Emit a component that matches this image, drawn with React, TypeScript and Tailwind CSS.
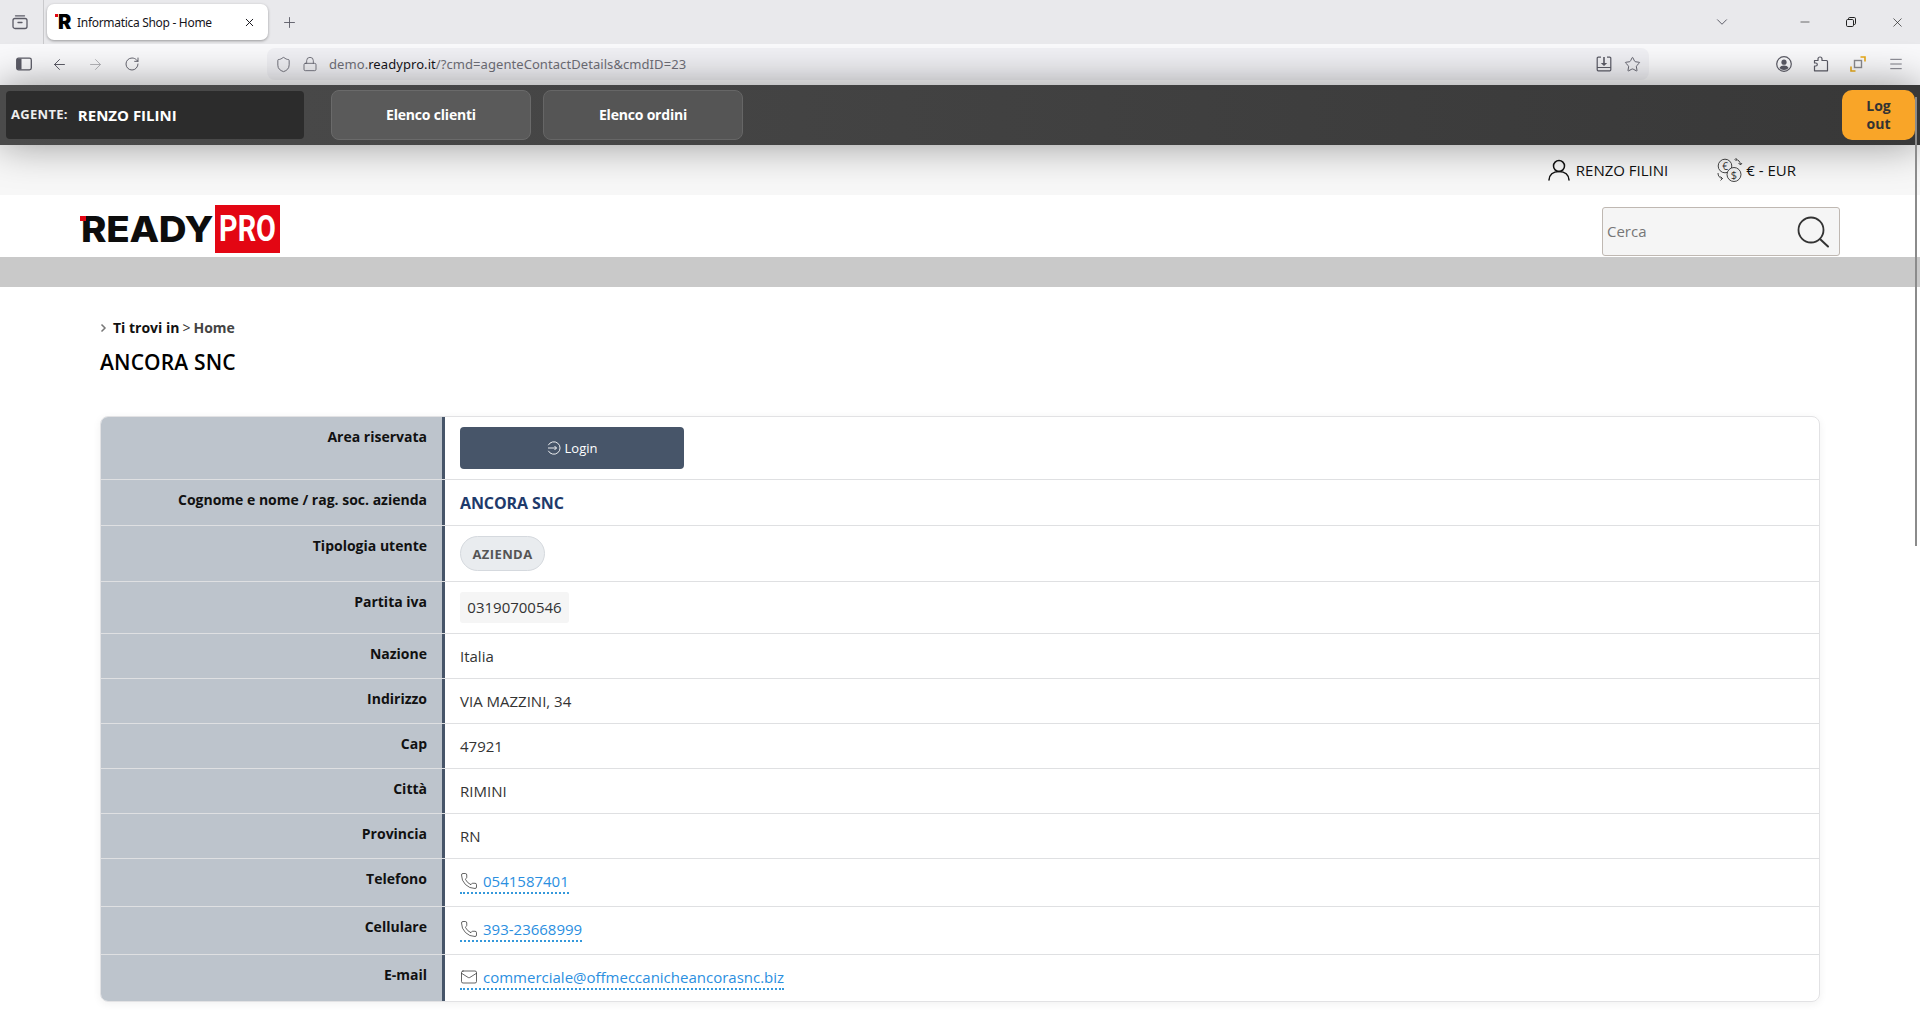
import React from "react";
import { ArrowLeft, ArrowRight, RotateCw, Star, Plus, X, ChevronDown, Minus, Phone, Mail, Menu, Shield, Lock } from "lucide-react";

const F = "font-['Open_Sans',sans-serif]";

function TabGroups() {
  return (
    <svg width="16" height="16" viewBox="0 0 16 16" fill="none" stroke="#5b5b66" strokeWidth="1.3">
      <rect x="1" y="4.5" width="14" height="10" rx="2" />
      <path d="M3.5 1.8h9M6 8.500h4" strokeLinecap="round" />
    </svg>
  );
}

function PanelIcon() {
  return (
    <svg width="16" height="14" viewBox="0 0 16 14" fill="none">
      <rect x="0.700" y="1.200" width="14.600" height="11.600" rx="1.800" stroke="#5b5b66" strokeWidth="1.300" />
      <rect x="1" y="1.500" width="4.500" height="11" fill="#5b5b66" />
    </svg>
  );
}

function Favicon() {
  return (
    <div className="relative w-[16px] h-[16px] shrink-0">
      <span className="absolute left-[3px] top-[-4px] text-[20px] leading-[24px] font-black text-black font-['Inter',sans-serif]">R</span>
      <span className="absolute left-[0px] top-[0px] w-[3px] h-[3px] bg-[#e30613]" />
    </div>
  );
}

function SaveIcon() {
  return (
    <svg width="16" height="16" viewBox="0 0 16 16" fill="none" stroke="#5b5b66" strokeWidth="1.200">
      <path d="M5 1.200H2.200a1 1 0 0 0-1 1v11.600a1 1 0 0 0 1 1h11.600a1 1 0 0 0 1-1V2.200a1 1 0 0 0-1-1H11M1.200 11.500h13.600" />
      <path d="M8 1v7" strokeWidth="1.600" />
      <path d="M4.800 7h6.400L8 10z" fill="#5b5b66" stroke="none" />
    </svg>
  );
}

function AccountIcon() {
  return (
    <svg width="16" height="16" viewBox="0 0 16 16" fill="none">
      <circle cx="8" cy="8" r="7.300" stroke="#5b5b66" strokeWidth="1.200" />
      <circle cx="8" cy="6.200" r="2.600" fill="#5b5b66" />
      <path d="M3.400 12c.8-1.700 2.600-2.500 4.600-2.500s3.800.8 4.600 2.500a6.500 6.500 0 0 1-9.200 0z" fill="#5b5b66" />
    </svg>
  );
}

function PuzzleIcon() {
  return (
    <svg width="16" height="16" viewBox="0 0 16 16" fill="none" stroke="#5b5b66" strokeWidth="1.200" strokeLinejoin="round">
      <path d="M1.500 14.800V10h1.300a1.500 1.500 0 0 0 0-3H1.500V4.500h3.500V3a2 2 0 0 1 4 0v1.500h4.500a1 1 0 0 1 1 1v9.300z" />
    </svg>
  );
}

function ContainerIcon() {
  return (
    <svg width="16" height="16" viewBox="0 0 16 16" fill="none">
      <path d="M10.500 1H15v4.500M1 10.500V15h4.500" stroke="#e8a919" strokeWidth="1.600" />
      <rect x="4.500" y="4.500" width="7" height="7" stroke="#8a8a8f" strokeWidth="1.400" />
    </svg>
  );
}

function RestoreIcon() {
  return (
    <svg width="10" height="10" viewBox="0 0 10 10" fill="none" stroke="#222" strokeWidth="1">
      <rect x="0.500" y="2.500" width="7" height="7" rx="1.200" />
      <path d="M2.500 2.500V1.700A1.200 1.200 0 0 1 3.700.5h4.600a1.200 1.200 0 0 1 1.200 1.200v4.600a1.200 1.200 0 0 1-1.200 1.200H7.500" />
    </svg>
  );
}

function UserIcon() {
  return (
    <svg width="22" height="22" viewBox="0 0 22 22" fill="none" stroke="#111" strokeWidth="1.500" strokeLinecap="round">
      <circle cx="11" cy="7" r="5.500" />
      <path d="M1 21c.3-5 3.800-8.500 10-8.500S20.700 16 21 21" />
    </svg>
  );
}

function CurrencyIcon() {
  return (
    <svg width="26" height="25" viewBox="0 0 26 25" fill="none" stroke="#333" strokeWidth="0.900">
      <circle cx="8" cy="8" r="6.800" />
      <circle cx="17" cy="16.500" r="7" fill="#f2f2f2" />
      <text x="8" y="11.500" textAnchor="middle" fontSize="10" fill="#333" stroke="none" fontFamily="Open Sans, sans-serif">€</text>
      <text x="17" y="20.500" textAnchor="middle" fontSize="11" fill="#333" stroke="none" fontFamily="Open Sans, sans-serif">$</text>
      <path d="M19 1.500c2.500.3 4 2 4.500 5M21.500 5l2 2 1.500-2M19.500 0l-1.500 1.500L19.500 3M1 15c0 3 1.500 5 4.500 5.500M3.500 18.500l2 2-2 2" strokeWidth="0.900" />
    </svg>
  );
}

function SearchIcon() {
  return (
    <svg width="32" height="32" viewBox="0 0 32 32" fill="none" stroke="#333" strokeWidth="1.800" strokeLinecap="round">
      <circle cx="14" cy="14" r="12.500" />
      <path d="M23.500 23.500l7.500 7" strokeWidth="2" />
    </svg>
  );
}

function LoginIcon() {
  return (
    <svg width="14" height="14" viewBox="0 0 14 14" fill="none" stroke="#fff" strokeWidth="0.900">
      <path d="M1.300 4.200A6.200 6.200 0 1 1 1.300 9.800" />
      <path d="M1 7h8.500M7.500 5l2 2-2 2" />
    </svg>
  );
}

function ContactLink({ icon, text }: { icon: React.ReactNode; text: string }) {
  return (
    <span className="inline-flex items-start gap-[5px] h-[25px] border-b-2 border-dotted border-[#3498db] text-[#2b8fdf] text-[15px] leading-[24px]">
      <span className="w-[18px] h-[24px] flex items-center justify-center">{icon}</span>
      {text}
    </span>
  );
}

const rows: { label: string; h: string; value: React.ReactNode }[] = [
  {
    label: "Area riservata",
    h: "h-[63px]",
    value: (
      <button className="w-[224px] h-[42px] rounded-[4px] bg-[#475569] text-white text-[13px] flex items-center justify-center gap-[4px]">
        <LoginIcon />
        <span className="mt-[1px]">Login</span>
      </button>
    ),
  },
  {
    label: "Cognome e nome / rag. soc. azienda",
    h: "h-[46px]",
    value: <div className="text-[16px] font-bold leading-[26px] text-[#1e3a6b] tracking-[-0.1px]">ANCORA SNC</div>,
  },
  {
    label: "Tipologia utente",
    h: "h-[56px]",
    value: (
      <span className="flex w-[85px] h-[35px] items-center justify-center rounded-full bg-[#e9ecef] border border-[#d5d9de] text-[13px] font-bold text-[#555] tracking-[0.4px] pt-[2px]">
        AZIENDA
      </span>
    ),
  },
  {
    label: "Partita iva",
    h: "h-[52px]",
    value: (
      <span className="flex w-[109px] h-[31px] items-center justify-center rounded-[3px] bg-[#f5f5f5] text-[15px] text-[#333]">
        03190700546
      </span>
    ),
  },
  { label: "Nazione", h: "h-[45px]", value: <div className="leading-[24px]">Italia</div> },
  { label: "Indirizzo", h: "h-[45px]", value: <div className="leading-[24px]">VIA MAZZINI, 34</div> },
  { label: "Cap", h: "h-[45px]", value: <div className="leading-[24px]">47921</div> },
  { label: "Città", h: "h-[45px]", value: <div className="leading-[24px]">RIMINI</div> },
  { label: "Provincia", h: "h-[45px]", value: <div className="leading-[24px]">RN</div> },
  {
    label: "Telefono",
    h: "h-[48px]",
    value: <ContactLink icon={<Phone size={18} strokeWidth={1} color="#333" />} text="0541587401" />,
  },
  {
    label: "Cellulare",
    h: "h-[48px]",
    value: <ContactLink icon={<Phone size={18} strokeWidth={1} color="#333" />} text="393-23668999" />,
  },
  {
    label: "E-mail",
    h: "h-[46px]",
    value: <ContactLink icon={<Mail size={20} strokeWidth={1} color="#333" />} text="commerciale@offmeccanicheancorasnc.biz" />,
  },
];

export default function App() {
  return (
    <div className={`relative h-screen overflow-hidden bg-white ${F}`}>
      {/* browser tab strip */}
      <div className="h-[44px] bg-[#e9e9ec] flex items-stretch font-['Noto_Sans',sans-serif]">
        <div className="w-[44px] flex items-center justify-center border-r border-[#c9c9cc] pr-[3px]">
          <TabGroups />
        </div>
        <div className="pl-[3px] pt-[4px]">
          <div className="w-[221px] h-[36px] rounded-[7px] bg-white shadow-[0_1px_3px_rgba(0,0,0,0.35)] flex items-center pl-[8px] pr-[12px] gap-[6px]">
            <Favicon />
            <span className="flex-1 mt-[1px] text-[12px] text-[#15141a] whitespace-nowrap tracking-[-0.3px]">Informatica Shop - Home</span>
            <X size={13} color="#15141a" strokeWidth={1.800} />
          </div>
        </div>
        <div className="ml-[13px] flex items-center">
          <Plus size={17} strokeWidth={1.300} color="#5b5b66" />
        </div>
        <div className="ml-auto flex items-center">
          <ChevronDown size={18} strokeWidth={1.300} color="#5b5b66" className="mr-[67px]" />
          <Minus size={14} strokeWidth={1.100} color="#222" className="mr-[34px]" />
          <RestoreIcon />
          <X size={15} strokeWidth={1.100} color="#222" className="ml-[34px] mr-[15px]" />
        </div>
      </div>

      {/* browser toolbar */}
      <div className="h-[41px] bg-[#f9f9fb] flex items-start font-['Noto_Sans',sans-serif]">
        <div className="w-[267px] h-[40px] flex items-center pl-[16px] shrink-0">
          <PanelIcon />
          <ArrowLeft size={17} strokeWidth={1.400} color="#5b5b66" className="ml-[19px]" />
          <ArrowRight size={17} strokeWidth={1.400} color="#b4b4b8" className="ml-[19px]" />
          <RotateCw size={16} strokeWidth={1.400} color="#5b5b66" className="ml-[20px]" />
        </div>
        <div className="mt-[4px] w-[1382px] h-[32px] rounded-[8px] bg-[#f0f0f4] flex items-center pl-[8px] pr-[8px]">
          <Shield size={17} strokeWidth={1.200} color="#5b5b66" />
          <Lock size={16} strokeWidth={1.200} color="#5b5b66" className="ml-[10px]" />
          <span className="ml-[11px] mt-[2px] text-[13px] text-[#6f6f78] flex-1 whitespace-nowrap tracking-[0.07px]">
            demo.<span className="text-[#15141a]">readypro.it</span>/?cmd=agenteContactDetails&amp;cmdID=23
          </span>
          <SaveIcon />
          <Star size={17} strokeWidth={1.300} color="#5b5b66" className="ml-[12px]" />
        </div>
        <div className="flex-1 h-[40px] flex items-center justify-end pr-[16px]">
          <AccountIcon />
          <span className="ml-[21px]"><PuzzleIcon /></span>
          <span className="ml-[21px]"><ContainerIcon /></span>
          <Menu size={16} strokeWidth={1.200} color="#5b5b66" className="ml-[22px]" />
        </div>
      </div>

      {/* agent bar */}
      <div className="relative z-10 h-[60px] bg-gradient-to-r from-[#4b4b4b] to-[#383838] flex items-center pl-[6px] pr-[5px] shadow-[0_0_40px_rgba(0,0,0,0.4)]">
        <div className="w-[298px] h-[48px] rounded-[4px] bg-[#2c2c2c] flex items-center pl-[5px] text-white font-bold">
          <span className="text-[13px] tracking-[0.3px] text-[#eee]">AGENTE:</span>
          <span className="ml-[10px] text-[15px]">RENZO FILINI</span>
        </div>
        <button className="ml-[27px] w-[200px] h-[50px] rounded-[8px] bg-[#5a5a5a] border border-[#6a6a6a] text-white text-[14px] font-bold tracking-[-0.2px] pb-[1px]">Elenco clienti</button>
        <button className="ml-[12px] w-[200px] h-[50px] rounded-[8px] bg-[#555555] border border-[#666666] text-white text-[14px] font-bold tracking-[-0.2px] pb-[1px]">Elenco ordini</button>
        <button className="ml-auto w-[73px] h-[50px] rounded-[10px] bg-[#f9a528] text-[#333] text-[14px] leading-[18px] font-bold pb-[1px]">Log<br />out</button>
      </div>

      {/* user strip */}
      <div className="h-[50px] bg-[#f7f7f7] flex items-center justify-end pr-[124px] text-[15px] text-[#111]">
        <UserIcon />
        <span className="ml-[6px] mt-[1px]">RENZO FILINI</span>
        <span className="ml-[49px]"><CurrencyIcon /></span>
        <span className="ml-[3px] mt-[1px]">€ - EUR</span>
      </div>

      {/* logo + search */}
      <div className="h-[62px] flex items-start pl-[80px] pr-[80px]">
        <div className="relative mt-[10px] h-[48px] flex items-stretch">
          <span className="w-[135px] text-[36px] leading-[48px] font-extrabold text-[#0d0d0d] font-['Inter',sans-serif] tracking-[-0.3px] pl-[1px] whitespace-nowrap origin-left scale-x-[1.07]">READY</span>
          <span className="absolute left-0 top-[11px] w-[6px] h-[5px] bg-[#e30613]" />
          <div className="w-[65px] bg-[#e30613] flex items-center justify-center overflow-hidden">
            <span className="text-[36px] leading-[48px] font-bold text-white font-['Roboto',sans-serif] scale-x-[0.8] whitespace-nowrap">PRO</span>
          </div>
        </div>
        <div className="ml-auto mt-[12px] w-[238px] h-[49px] rounded-[3px] bg-[#f5f5f5] border border-[#bfb8b2] flex items-center pl-[4px] pr-[10px]">
          <span className="flex-1 text-[15px] text-[#777]">Cerca</span>
          <SearchIcon />
        </div>
      </div>

      {/* gray nav */}
      <div className="h-[30px] bg-[#c9c9c9]" />

      {/* content */}
      <div className="px-[100px]">
        <div className="pt-[31px] h-[51px] flex items-center text-[14px] font-bold text-[#111] leading-[20px]">
          <svg width="13" height="10" viewBox="0 0 13 10" fill="none" stroke="#777" strokeWidth="1.500" className="shrink-0 -mt-[1px]">
            <path d="M1.500 1.500L5 5 1.500 8.500" />
          </svg>
          <span>Ti trovi in</span>
          <span className="mx-[3px] font-normal text-[#333]">&gt;</span>
          <span className="text-[#444]">Home</span>
        </div>
        <h1 className="mt-[11px] text-[21px] leading-[27px] font-semibold text-black tracking-[0.15px]">ANCORA SNC</h1>

        <div className="mt-[40px] rounded-[8px] border border-[#e2e2e4] overflow-hidden shadow-[0_2px_8px_rgba(0,0,0,0.06)]">
          {rows.map((r, i) => (
            <div key={r.label} className={`flex ${r.h} ${i < rows.length - 1 ? "border-b border-[#dfe0e2]" : ""}`}>
              <div className="w-[344px] shrink-0 bg-[#bdc4cc] border-r-[3px] border-[#475569] pr-[15px] pt-[10px] text-right text-[14px] font-bold leading-[20px] text-[#111]">
                {r.label}
              </div>
              <div className="flex-1 pl-[15px] pt-[10px] text-[15px] text-[#333]">{r.value}</div>
            </div>
          ))}
        </div>
      </div>

      {/* overlay scrollbar */}
      <div className="absolute z-20 left-[1915px] top-[97px] w-[2px] h-[449px] bg-[#8b8b8b]" />
    </div>
  );
}
